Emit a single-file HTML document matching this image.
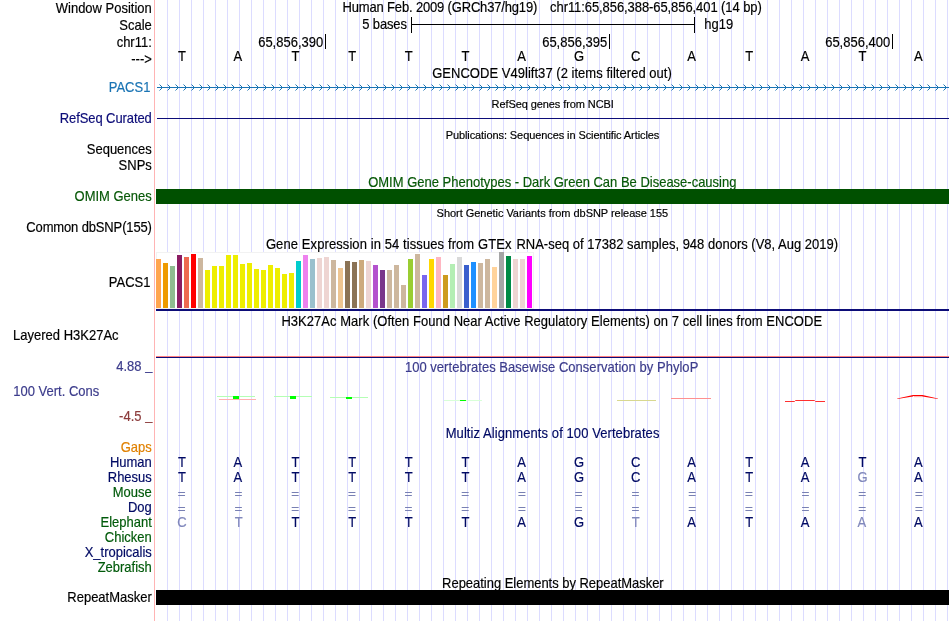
<!DOCTYPE html>
<html><head><meta charset="utf-8"><title>UCSC Genome Browser</title>
<style>html,body{margin:0;padding:0;background:#fff;overflow:hidden}svg{display:block;will-change:transform}text{font-family:'Liberation Sans', sans-serif;white-space:pre}</style></head><body>
<svg width="950" height="621" viewBox="0 0 950 621">
<rect width="950" height="621" fill="#fff"/>
<path d="M167.5 0V621M179.5 0V621M191.5 0V621M203.5 0V621M215.5 0V621M227.5 0V621M239.5 0V621M251.5 0V621M263.5 0V621M275.5 0V621M287.5 0V621M299.5 0V621M311.5 0V621M323.5 0V621M335.5 0V621M347.5 0V621M359.5 0V621M371.5 0V621M383.5 0V621M395.5 0V621M407.5 0V621M419.5 0V621M431.5 0V621M443.5 0V621M455.5 0V621M467.5 0V621M479.5 0V621M491.5 0V621M503.5 0V621M515.5 0V621M527.5 0V621M539.5 0V621M551.5 0V621M563.5 0V621M575.5 0V621M587.5 0V621M599.5 0V621M611.5 0V621M623.5 0V621M635.5 0V621M647.5 0V621M659.5 0V621M671.5 0V621M683.5 0V621M695.5 0V621M707.5 0V621M719.5 0V621M731.5 0V621M743.5 0V621M755.5 0V621M767.5 0V621M779.5 0V621M791.5 0V621M803.5 0V621M815.5 0V621M827.5 0V621M839.5 0V621M851.5 0V621M863.5 0V621M875.5 0V621M887.5 0V621M899.5 0V621M911.5 0V621M923.5 0V621M935.5 0V621M947.5 0V621" stroke="#dcdcff" stroke-width="1" fill="none" shape-rendering="crispEdges"/>
<rect x="154" y="0" width="1" height="621" fill="#ffb4b4" shape-rendering="crispEdges"/>
<text transform="translate(151.8 13) scale(0.9286 1)" text-anchor="end" font-size="14.0" fill="#000" stroke="#000" stroke-width="0.18" xml:space="preserve">Window Position</text>
<text transform="translate(151.8 30) scale(0.9286 1)" text-anchor="end" font-size="14.0" fill="#000" stroke="#000" stroke-width="0.18" xml:space="preserve">Scale</text>
<text transform="translate(151.8 47) scale(0.9286 1)" text-anchor="end" font-size="14.0" fill="#000" stroke="#000" stroke-width="0.18" xml:space="preserve">chr11:</text>
<text transform="translate(151.8 63.6) scale(0.9286 1)" text-anchor="end" font-size="14.0" fill="#000" stroke="#000" stroke-width="0.18" xml:space="preserve">---&gt;</text>
<text transform="translate(342.6 12) scale(0.9286 1)" text-anchor="start" font-size="14.0" fill="#000" stroke="#000" stroke-width="0.18" xml:space="preserve" textLength="209.68" lengthAdjust="spacing">Human Feb. 2009 (GRCh37/hg19)</text>
<text transform="translate(550.1 12) scale(0.9286 1)" text-anchor="start" font-size="14.0" fill="#000" stroke="#000" stroke-width="0.18" xml:space="preserve" textLength="227.98" lengthAdjust="spacing">chr11:65,856,388-65,856,401 (14 bp)</text>
<text transform="translate(362.3 29) scale(0.9286 1)" text-anchor="start" font-size="14.0" fill="#000" stroke="#000" stroke-width="0.18" xml:space="preserve" textLength="48.03" lengthAdjust="spacing">5 bases</text>
<rect x="411" y="17" width="1" height="16" fill="#000" shape-rendering="crispEdges"/>
<rect x="694" y="17" width="1" height="16" fill="#000" shape-rendering="crispEdges"/>
<rect x="411" y="24" width="284" height="1" fill="#000" shape-rendering="crispEdges"/>
<text transform="translate(704.2 29) scale(0.9286 1)" text-anchor="start" font-size="14.0" fill="#000" stroke="#000" stroke-width="0.18" xml:space="preserve">hg19</text>
<text transform="translate(323.2 47.0) scale(0.9286 1)" text-anchor="end" font-size="14.0" fill="#000" stroke="#000" stroke-width="0.18" xml:space="preserve">65,856,390</text>
<rect x="325" y="34" width="1" height="15" fill="#000" shape-rendering="crispEdges"/>
<text transform="translate(607.2 47.0) scale(0.9286 1)" text-anchor="end" font-size="14.0" fill="#000" stroke="#000" stroke-width="0.18" xml:space="preserve">65,856,395</text>
<rect x="609" y="34" width="1" height="15" fill="#000" shape-rendering="crispEdges"/>
<text transform="translate(890.2 47.0) scale(0.9286 1)" text-anchor="end" font-size="14.0" fill="#000" stroke="#000" stroke-width="0.18" xml:space="preserve">65,856,400</text>
<rect x="892" y="34" width="1" height="15" fill="#000" shape-rendering="crispEdges"/>
<text transform="translate(182.0 61) scale(0.9286 1)" text-anchor="middle" font-size="14.0" fill="#000" stroke="#000" stroke-width="0.18" xml:space="preserve">T</text>
<text transform="translate(237.91 61) scale(0.9286 1)" text-anchor="middle" font-size="14.0" fill="#000" stroke="#000" stroke-width="0.18" xml:space="preserve">A</text>
<text transform="translate(295.42 61) scale(0.9286 1)" text-anchor="middle" font-size="14.0" fill="#000" stroke="#000" stroke-width="0.18" xml:space="preserve">T</text>
<text transform="translate(352.13 61) scale(0.9286 1)" text-anchor="middle" font-size="14.0" fill="#000" stroke="#000" stroke-width="0.18" xml:space="preserve">T</text>
<text transform="translate(408.84000000000003 61) scale(0.9286 1)" text-anchor="middle" font-size="14.0" fill="#000" stroke="#000" stroke-width="0.18" xml:space="preserve">T</text>
<text transform="translate(465.55 61) scale(0.9286 1)" text-anchor="middle" font-size="14.0" fill="#000" stroke="#000" stroke-width="0.18" xml:space="preserve">T</text>
<text transform="translate(521.46 61) scale(0.9286 1)" text-anchor="middle" font-size="14.0" fill="#000" stroke="#000" stroke-width="0.18" xml:space="preserve">A</text>
<text transform="translate(578.97 61) scale(0.9286 1)" text-anchor="middle" font-size="14.0" fill="#000" stroke="#000" stroke-width="0.18" xml:space="preserve">G</text>
<text transform="translate(635.6800000000001 61) scale(0.9286 1)" text-anchor="middle" font-size="14.0" fill="#000" stroke="#000" stroke-width="0.18" xml:space="preserve">C</text>
<text transform="translate(691.59 61) scale(0.9286 1)" text-anchor="middle" font-size="14.0" fill="#000" stroke="#000" stroke-width="0.18" xml:space="preserve">A</text>
<text transform="translate(749.1 61) scale(0.9286 1)" text-anchor="middle" font-size="14.0" fill="#000" stroke="#000" stroke-width="0.18" xml:space="preserve">T</text>
<text transform="translate(805.0100000000001 61) scale(0.9286 1)" text-anchor="middle" font-size="14.0" fill="#000" stroke="#000" stroke-width="0.18" xml:space="preserve">A</text>
<text transform="translate(862.52 61) scale(0.9286 1)" text-anchor="middle" font-size="14.0" fill="#000" stroke="#000" stroke-width="0.18" xml:space="preserve">T</text>
<text transform="translate(918.4300000000001 61) scale(0.9286 1)" text-anchor="middle" font-size="14.0" fill="#000" stroke="#000" stroke-width="0.18" xml:space="preserve">A</text>
<text transform="translate(432.2 78) scale(0.9286 1)" text-anchor="start" font-size="14.0" fill="#000" stroke="#000" stroke-width="0.18" xml:space="preserve" textLength="258.03" lengthAdjust="spacing">GENCODE V49lift37 (2 items filtered out)</text>
<text transform="translate(150.4 92) scale(0.9286 1)" text-anchor="end" font-size="14.0" fill="#1a74b4" stroke="#1a74b4" stroke-width="0.18" xml:space="preserve">PACS1</text>
<rect x="157" y="87" width="792" height="1" fill="#1a74b4" shape-rendering="crispEdges"/>
<path d="M159.5 84.5L162.5 87.5L159.5 90.5M167.5 84.5L170.5 87.5L167.5 90.5M175.5 84.5L178.5 87.5L175.5 90.5M183.5 84.5L186.5 87.5L183.5 90.5M191.5 84.5L194.5 87.5L191.5 90.5M199.5 84.5L202.5 87.5L199.5 90.5M207.5 84.5L210.5 87.5L207.5 90.5M215.5 84.5L218.5 87.5L215.5 90.5M223.5 84.5L226.5 87.5L223.5 90.5M231.5 84.5L234.5 87.5L231.5 90.5M239.5 84.5L242.5 87.5L239.5 90.5M247.5 84.5L250.5 87.5L247.5 90.5M255.5 84.5L258.5 87.5L255.5 90.5M263.5 84.5L266.5 87.5L263.5 90.5M271.5 84.5L274.5 87.5L271.5 90.5M279.5 84.5L282.5 87.5L279.5 90.5M287.5 84.5L290.5 87.5L287.5 90.5M295.5 84.5L298.5 87.5L295.5 90.5M303.5 84.5L306.5 87.5L303.5 90.5M311.5 84.5L314.5 87.5L311.5 90.5M319.5 84.5L322.5 87.5L319.5 90.5M327.5 84.5L330.5 87.5L327.5 90.5M335.5 84.5L338.5 87.5L335.5 90.5M343.5 84.5L346.5 87.5L343.5 90.5M351.5 84.5L354.5 87.5L351.5 90.5M359.5 84.5L362.5 87.5L359.5 90.5M367.5 84.5L370.5 87.5L367.5 90.5M375.5 84.5L378.5 87.5L375.5 90.5M383.5 84.5L386.5 87.5L383.5 90.5M391.5 84.5L394.5 87.5L391.5 90.5M399.5 84.5L402.5 87.5L399.5 90.5M407.5 84.5L410.5 87.5L407.5 90.5M415.5 84.5L418.5 87.5L415.5 90.5M423.5 84.5L426.5 87.5L423.5 90.5M431.5 84.5L434.5 87.5L431.5 90.5M439.5 84.5L442.5 87.5L439.5 90.5M447.5 84.5L450.5 87.5L447.5 90.5M455.5 84.5L458.5 87.5L455.5 90.5M463.5 84.5L466.5 87.5L463.5 90.5M471.5 84.5L474.5 87.5L471.5 90.5M479.5 84.5L482.5 87.5L479.5 90.5M487.5 84.5L490.5 87.5L487.5 90.5M495.5 84.5L498.5 87.5L495.5 90.5M503.5 84.5L506.5 87.5L503.5 90.5M511.5 84.5L514.5 87.5L511.5 90.5M519.5 84.5L522.5 87.5L519.5 90.5M527.5 84.5L530.5 87.5L527.5 90.5M535.5 84.5L538.5 87.5L535.5 90.5M543.5 84.5L546.5 87.5L543.5 90.5M551.5 84.5L554.5 87.5L551.5 90.5M559.5 84.5L562.5 87.5L559.5 90.5M567.5 84.5L570.5 87.5L567.5 90.5M575.5 84.5L578.5 87.5L575.5 90.5M583.5 84.5L586.5 87.5L583.5 90.5M591.5 84.5L594.5 87.5L591.5 90.5M599.5 84.5L602.5 87.5L599.5 90.5M607.5 84.5L610.5 87.5L607.5 90.5M615.5 84.5L618.5 87.5L615.5 90.5M623.5 84.5L626.5 87.5L623.5 90.5M631.5 84.5L634.5 87.5L631.5 90.5M639.5 84.5L642.5 87.5L639.5 90.5M647.5 84.5L650.5 87.5L647.5 90.5M655.5 84.5L658.5 87.5L655.5 90.5M663.5 84.5L666.5 87.5L663.5 90.5M671.5 84.5L674.5 87.5L671.5 90.5M679.5 84.5L682.5 87.5L679.5 90.5M687.5 84.5L690.5 87.5L687.5 90.5M695.5 84.5L698.5 87.5L695.5 90.5M703.5 84.5L706.5 87.5L703.5 90.5M711.5 84.5L714.5 87.5L711.5 90.5M719.5 84.5L722.5 87.5L719.5 90.5M727.5 84.5L730.5 87.5L727.5 90.5M735.5 84.5L738.5 87.5L735.5 90.5M743.5 84.5L746.5 87.5L743.5 90.5M751.5 84.5L754.5 87.5L751.5 90.5M759.5 84.5L762.5 87.5L759.5 90.5M767.5 84.5L770.5 87.5L767.5 90.5M775.5 84.5L778.5 87.5L775.5 90.5M783.5 84.5L786.5 87.5L783.5 90.5M791.5 84.5L794.5 87.5L791.5 90.5M799.5 84.5L802.5 87.5L799.5 90.5M807.5 84.5L810.5 87.5L807.5 90.5M815.5 84.5L818.5 87.5L815.5 90.5M823.5 84.5L826.5 87.5L823.5 90.5M831.5 84.5L834.5 87.5L831.5 90.5M839.5 84.5L842.5 87.5L839.5 90.5M847.5 84.5L850.5 87.5L847.5 90.5M855.5 84.5L858.5 87.5L855.5 90.5M863.5 84.5L866.5 87.5L863.5 90.5M871.5 84.5L874.5 87.5L871.5 90.5M879.5 84.5L882.5 87.5L879.5 90.5M887.5 84.5L890.5 87.5L887.5 90.5M895.5 84.5L898.5 87.5L895.5 90.5M903.5 84.5L906.5 87.5L903.5 90.5M911.5 84.5L914.5 87.5L911.5 90.5M919.5 84.5L922.5 87.5L919.5 90.5M927.5 84.5L930.5 87.5L927.5 90.5M935.5 84.5L938.5 87.5L935.5 90.5M943.5 84.5L946.5 87.5L943.5 90.5" stroke="#1a74b4" stroke-width="1" fill="none"/>
<text transform="translate(491.6 108) scale(0.9565 1)" text-anchor="start" font-size="11.5" fill="#000" stroke="#000" stroke-width="0.18" xml:space="preserve" textLength="127.75" lengthAdjust="spacing">RefSeq genes from NCBI</text>
<text transform="translate(151.8 123) scale(0.9286 1)" text-anchor="end" font-size="14.0" fill="#0c0c78" stroke="#0c0c78" stroke-width="0.18" xml:space="preserve" textLength="99.08" lengthAdjust="spacing">RefSeq Curated</text>
<rect x="157" y="118" width="792" height="1" fill="#0c0c78" shape-rendering="crispEdges"/>
<text transform="translate(445.7 139) scale(0.9565 1)" text-anchor="start" font-size="11.5" fill="#000" stroke="#000" stroke-width="0.18" xml:space="preserve" textLength="223.31" lengthAdjust="spacing">Publications: Sequences in Scientific Articles</text>
<text transform="translate(151.8 154) scale(0.9286 1)" text-anchor="end" font-size="14.0" fill="#000" stroke="#000" stroke-width="0.18" xml:space="preserve">Sequences</text>
<text transform="translate(151.8 170) scale(0.9286 1)" text-anchor="end" font-size="14.0" fill="#000" stroke="#000" stroke-width="0.18" xml:space="preserve">SNPs</text>
<text transform="translate(368.2 187) scale(0.9286 1)" text-anchor="start" font-size="14.0" fill="#075807" stroke="#075807" stroke-width="0.18" xml:space="preserve" textLength="396.52" lengthAdjust="spacing">OMIM Gene Phenotypes - Dark Green Can Be Disease-causing</text>
<text transform="translate(151.8 201) scale(0.9286 1)" text-anchor="end" font-size="14.0" fill="#075807" stroke="#075807" stroke-width="0.18" xml:space="preserve">OMIM Genes</text>
<rect x="156" y="189" width="793" height="15" fill="#005000" shape-rendering="crispEdges"/>
<text transform="translate(436.6 217) scale(0.9565 1)" text-anchor="start" font-size="11.5" fill="#000" stroke="#000" stroke-width="0.18" xml:space="preserve" textLength="242.02" lengthAdjust="spacing">Short Genetic Variants from dbSNP release 155</text>
<text transform="translate(151.9 232) scale(0.9286 1)" text-anchor="end" font-size="14.0" fill="#000" stroke="#000" stroke-width="0.18" xml:space="preserve" textLength="135.26" lengthAdjust="spacing">Common dbSNP(155)</text>
<text transform="translate(265.9 249) scale(0.9286 1)" text-anchor="start" font-size="14.0" fill="#000" stroke="#000" stroke-width="0.18" xml:space="preserve" textLength="264.49" lengthAdjust="spacing">Gene Expression in 54 tissues from GTEx</text>
<text transform="translate(516.4 249) scale(0.9286 1)" text-anchor="start" font-size="14.0" fill="#000" stroke="#000" stroke-width="0.18" xml:space="preserve" textLength="346.45" lengthAdjust="spacing">RNA-seq of 17382 samples, 948 donors (V8, Aug 2019)</text>
<text transform="translate(150.5 287) scale(0.9286 1)" text-anchor="end" font-size="14.0" fill="#000" stroke="#000" stroke-width="0.18" xml:space="preserve">PACS1</text>
<rect x="156.5" y="252.5" width="377" height="56" fill="#fff" stroke="#f2f2f2" stroke-width="1" shape-rendering="crispEdges"/>
<rect x="156" y="259" width="5" height="49" fill="#FFA54F" shape-rendering="crispEdges"/>
<rect x="163" y="263" width="5" height="45" fill="#EE9A00" shape-rendering="crispEdges"/>
<rect x="170" y="266" width="5" height="42" fill="#8FBC8F" shape-rendering="crispEdges"/>
<rect x="177" y="255" width="5" height="53" fill="#8B1C62" shape-rendering="crispEdges"/>
<rect x="184" y="257" width="5" height="51" fill="#EE6A50" shape-rendering="crispEdges"/>
<rect x="191" y="254" width="5" height="54" fill="#FF0000" shape-rendering="crispEdges"/>
<rect x="198" y="258" width="5" height="50" fill="#CDB79E" shape-rendering="crispEdges"/>
<rect x="205" y="270" width="5" height="38" fill="#EEEE00" shape-rendering="crispEdges"/>
<rect x="212" y="266" width="5" height="42" fill="#EEEE00" shape-rendering="crispEdges"/>
<rect x="219" y="266" width="5" height="42" fill="#EEEE00" shape-rendering="crispEdges"/>
<rect x="226" y="255" width="5" height="53" fill="#EEEE00" shape-rendering="crispEdges"/>
<rect x="233" y="255" width="5" height="53" fill="#EEEE00" shape-rendering="crispEdges"/>
<rect x="240" y="264" width="5" height="44" fill="#EEEE00" shape-rendering="crispEdges"/>
<rect x="247" y="263" width="5" height="45" fill="#EEEE00" shape-rendering="crispEdges"/>
<rect x="254" y="269" width="5" height="39" fill="#EEEE00" shape-rendering="crispEdges"/>
<rect x="261" y="270" width="5" height="38" fill="#EEEE00" shape-rendering="crispEdges"/>
<rect x="268" y="265" width="5" height="43" fill="#EEEE00" shape-rendering="crispEdges"/>
<rect x="275" y="268" width="5" height="40" fill="#EEEE00" shape-rendering="crispEdges"/>
<rect x="282" y="274" width="5" height="34" fill="#EEEE00" shape-rendering="crispEdges"/>
<rect x="289" y="273" width="5" height="35" fill="#EEEE00" shape-rendering="crispEdges"/>
<rect x="296" y="261" width="5" height="47" fill="#00CDCD" shape-rendering="crispEdges"/>
<rect x="303" y="255" width="5" height="53" fill="#EE82EE" shape-rendering="crispEdges"/>
<rect x="310" y="259" width="5" height="49" fill="#9AC0CD" shape-rendering="crispEdges"/>
<rect x="317" y="258" width="5" height="50" fill="#EED5D2" shape-rendering="crispEdges"/>
<rect x="324" y="257" width="5" height="51" fill="#EED5D2" shape-rendering="crispEdges"/>
<rect x="331" y="260" width="5" height="48" fill="#CDB79E" shape-rendering="crispEdges"/>
<rect x="338" y="268" width="5" height="40" fill="#EEC591" shape-rendering="crispEdges"/>
<rect x="345" y="261" width="5" height="47" fill="#8B7355" shape-rendering="crispEdges"/>
<rect x="352" y="262" width="5" height="46" fill="#8B7355" shape-rendering="crispEdges"/>
<rect x="359" y="260" width="5" height="48" fill="#CDAA7D" shape-rendering="crispEdges"/>
<rect x="366" y="261" width="5" height="47" fill="#EED5D2" shape-rendering="crispEdges"/>
<rect x="373" y="265" width="5" height="43" fill="#B452CD" shape-rendering="crispEdges"/>
<rect x="380" y="270" width="5" height="38" fill="#7A378B" shape-rendering="crispEdges"/>
<rect x="387" y="270" width="5" height="38" fill="#CDB79E" shape-rendering="crispEdges"/>
<rect x="394" y="265" width="5" height="43" fill="#CDB79E" shape-rendering="crispEdges"/>
<rect x="401" y="285" width="5" height="23" fill="#CDB79E" shape-rendering="crispEdges"/>
<rect x="408" y="259" width="5" height="49" fill="#9ACD32" shape-rendering="crispEdges"/>
<rect x="415" y="254" width="5" height="54" fill="#CDB79E" shape-rendering="crispEdges"/>
<rect x="422" y="275" width="5" height="33" fill="#7A67EE" shape-rendering="crispEdges"/>
<rect x="429" y="259" width="5" height="49" fill="#FFD700" shape-rendering="crispEdges"/>
<rect x="436" y="257" width="5" height="51" fill="#FFB6C1" shape-rendering="crispEdges"/>
<rect x="443" y="275" width="5" height="33" fill="#CD9B1D" shape-rendering="crispEdges"/>
<rect x="450" y="264" width="5" height="44" fill="#B4EEB4" shape-rendering="crispEdges"/>
<rect x="457" y="257" width="5" height="51" fill="#D9D9D9" shape-rendering="crispEdges"/>
<rect x="464" y="265" width="5" height="43" fill="#3A5FCD" shape-rendering="crispEdges"/>
<rect x="471" y="262" width="5" height="46" fill="#1E90FF" shape-rendering="crispEdges"/>
<rect x="478" y="263" width="5" height="45" fill="#CDB79E" shape-rendering="crispEdges"/>
<rect x="485" y="259" width="5" height="49" fill="#CDB79E" shape-rendering="crispEdges"/>
<rect x="492" y="267" width="5" height="41" fill="#FFD39B" shape-rendering="crispEdges"/>
<rect x="499" y="252" width="5" height="56" fill="#A6A6A6" shape-rendering="crispEdges"/>
<rect x="506" y="256" width="5" height="52" fill="#008B45" shape-rendering="crispEdges"/>
<rect x="513" y="259" width="5" height="49" fill="#EED5D2" shape-rendering="crispEdges"/>
<rect x="520" y="259" width="5" height="49" fill="#EED5D2" shape-rendering="crispEdges"/>
<rect x="527" y="256" width="5" height="52" fill="#FF00FF" shape-rendering="crispEdges"/>
<rect x="156" y="309" width="793" height="2" fill="#0c0c78" shape-rendering="crispEdges"/>
<text transform="translate(281.4 326) scale(0.9286 1)" text-anchor="start" font-size="14.0" fill="#000" stroke="#000" stroke-width="0.18" xml:space="preserve" textLength="582.29" lengthAdjust="spacing">H3K27Ac Mark (Often Found Near Active Regulatory Elements) on 7 cell lines from ENCODE</text>
<text transform="translate(13.1 340) scale(0.9286 1)" text-anchor="start" font-size="14.0" fill="#000" stroke="#000" stroke-width="0.18" xml:space="preserve">Layered H3K27Ac</text>
<rect x="156" y="356" width="793" height="1" fill="#ff8080" shape-rendering="crispEdges"/>
<rect x="156" y="357" width="793" height="1" fill="#0c0c78" shape-rendering="crispEdges"/>
<text transform="translate(404.9 372) scale(0.9286 1)" text-anchor="start" font-size="14.0" fill="#3c3c8c" stroke="#3c3c8c" stroke-width="0.18" xml:space="preserve" textLength="315.97" lengthAdjust="spacing">100 vertebrates Basewise Conservation by PhyloP</text>
<text transform="translate(141.5 371) scale(0.9286 1)" text-anchor="end" font-size="14.0" fill="#3c3c8c" stroke="#3c3c8c" stroke-width="0.18" xml:space="preserve">4.88</text>
<text transform="translate(152.5 370) scale(0.9286 1)" text-anchor="end" font-size="14.0" fill="#3c3c8c" stroke="#3c3c8c" stroke-width="0.18" xml:space="preserve">_</text>
<text transform="translate(13.3 396) scale(0.9286 1)" text-anchor="start" font-size="14.0" fill="#3c3c8c" stroke="#3c3c8c" stroke-width="0.18" xml:space="preserve">100 Vert. Cons</text>
<text transform="translate(141.5 421) scale(0.9286 1)" text-anchor="end" font-size="14.0" fill="#8c3c3c" stroke="#8c3c3c" stroke-width="0.18" xml:space="preserve">-4.5</text>
<text transform="translate(152.5 420) scale(0.9286 1)" text-anchor="end" font-size="14.0" fill="#8c3c3c" stroke="#8c3c3c" stroke-width="0.18" xml:space="preserve">_</text>
<rect x="217" y="396" width="38" height="1" fill="#b4ffb4" shape-rendering="crispEdges"/>
<rect x="219" y="399" width="37" height="1" fill="#ffb0b0" shape-rendering="crispEdges"/>
<rect x="233" y="396" width="6" height="3" fill="#00ff00" shape-rendering="crispEdges"/>
<rect x="274" y="396" width="38" height="1" fill="#b4ffb4" shape-rendering="crispEdges"/>
<rect x="290" y="396" width="6" height="3" fill="#00ff00" shape-rendering="crispEdges"/>
<rect x="330" y="397" width="38" height="1" fill="#b4ffb4" shape-rendering="crispEdges"/>
<rect x="346" y="397" width="6" height="2" fill="#00ff00" shape-rendering="crispEdges"/>
<rect x="444" y="400" width="38" height="1" fill="#d8ffd8" shape-rendering="crispEdges"/>
<rect x="460" y="400" width="6" height="1" fill="#00ff00" shape-rendering="crispEdges"/>
<rect x="617" y="400" width="39" height="1" fill="#d8d890" shape-rendering="crispEdges"/>
<rect x="671" y="398" width="40" height="1" fill="#ff9090" shape-rendering="crispEdges"/>
<path d="M785 401.5H794.5L795.5 400.5H814.5L815.5 401.5H825" stroke="#ff3030" stroke-width="1" fill="none"/>
<rect x="914" y="396" width="8.5" height="1.2" fill="#ffb4b4"/>
<path d="M897.3 398.5L913 394.9H922.5L937.8 398.5L937.8 399.1L922.6 396.5L922 396H913.5L912.9 396.5L897.3 399.1Z" fill="#ff0000"/>
<text transform="translate(445.7 438) scale(0.9286 1)" text-anchor="start" font-size="14.0" fill="#000a64" stroke="#000a64" stroke-width="0.18" xml:space="preserve" textLength="230.14" lengthAdjust="spacing">Multiz Alignments of 100 Vertebrates</text>
<text transform="translate(151.8 452) scale(0.9286 1)" text-anchor="end" font-size="14.0" fill="#e08000" stroke="#e08000" stroke-width="0.18" xml:space="preserve">Gaps</text>
<text transform="translate(151.8 467) scale(0.9286 1)" text-anchor="end" font-size="14.0" fill="#000a64" stroke="#000a64" stroke-width="0.18" xml:space="preserve">Human</text>
<text transform="translate(151.8 482) scale(0.9286 1)" text-anchor="end" font-size="14.0" fill="#000a64" stroke="#000a64" stroke-width="0.18" xml:space="preserve">Rhesus</text>
<text transform="translate(151.8 497) scale(0.9286 1)" text-anchor="end" font-size="14.0" fill="#005a0a" stroke="#005a0a" stroke-width="0.18" xml:space="preserve">Mouse</text>
<text transform="translate(151.8 512) scale(0.9286 1)" text-anchor="end" font-size="14.0" fill="#000a64" stroke="#000a64" stroke-width="0.18" xml:space="preserve">Dog</text>
<text transform="translate(151.8 527) scale(0.9286 1)" text-anchor="end" font-size="14.0" fill="#005a0a" stroke="#005a0a" stroke-width="0.18" xml:space="preserve">Elephant</text>
<text transform="translate(151.8 542) scale(0.9286 1)" text-anchor="end" font-size="14.0" fill="#005a0a" stroke="#005a0a" stroke-width="0.18" xml:space="preserve">Chicken</text>
<text transform="translate(151.8 557) scale(0.9286 1)" text-anchor="end" font-size="14.0" fill="#000a64" stroke="#000a64" stroke-width="0.18" xml:space="preserve">X_tropicalis</text>
<text transform="translate(151.8 572) scale(0.9286 1)" text-anchor="end" font-size="14.0" fill="#005a0a" stroke="#005a0a" stroke-width="0.18" xml:space="preserve">Zebrafish</text>
<text transform="translate(182.0 467) scale(0.9286 1)" text-anchor="middle" font-size="14.0" fill="#000a64" stroke="#000a64" stroke-width="0.18" xml:space="preserve">T</text>
<text transform="translate(237.91 467) scale(0.9286 1)" text-anchor="middle" font-size="14.0" fill="#000a64" stroke="#000a64" stroke-width="0.18" xml:space="preserve">A</text>
<text transform="translate(295.42 467) scale(0.9286 1)" text-anchor="middle" font-size="14.0" fill="#000a64" stroke="#000a64" stroke-width="0.18" xml:space="preserve">T</text>
<text transform="translate(352.13 467) scale(0.9286 1)" text-anchor="middle" font-size="14.0" fill="#000a64" stroke="#000a64" stroke-width="0.18" xml:space="preserve">T</text>
<text transform="translate(408.84000000000003 467) scale(0.9286 1)" text-anchor="middle" font-size="14.0" fill="#000a64" stroke="#000a64" stroke-width="0.18" xml:space="preserve">T</text>
<text transform="translate(465.55 467) scale(0.9286 1)" text-anchor="middle" font-size="14.0" fill="#000a64" stroke="#000a64" stroke-width="0.18" xml:space="preserve">T</text>
<text transform="translate(521.46 467) scale(0.9286 1)" text-anchor="middle" font-size="14.0" fill="#000a64" stroke="#000a64" stroke-width="0.18" xml:space="preserve">A</text>
<text transform="translate(578.97 467) scale(0.9286 1)" text-anchor="middle" font-size="14.0" fill="#000a64" stroke="#000a64" stroke-width="0.18" xml:space="preserve">G</text>
<text transform="translate(635.6800000000001 467) scale(0.9286 1)" text-anchor="middle" font-size="14.0" fill="#000a64" stroke="#000a64" stroke-width="0.18" xml:space="preserve">C</text>
<text transform="translate(691.59 467) scale(0.9286 1)" text-anchor="middle" font-size="14.0" fill="#000a64" stroke="#000a64" stroke-width="0.18" xml:space="preserve">A</text>
<text transform="translate(749.1 467) scale(0.9286 1)" text-anchor="middle" font-size="14.0" fill="#000a64" stroke="#000a64" stroke-width="0.18" xml:space="preserve">T</text>
<text transform="translate(805.0100000000001 467) scale(0.9286 1)" text-anchor="middle" font-size="14.0" fill="#000a64" stroke="#000a64" stroke-width="0.18" xml:space="preserve">A</text>
<text transform="translate(862.52 467) scale(0.9286 1)" text-anchor="middle" font-size="14.0" fill="#000a64" stroke="#000a64" stroke-width="0.18" xml:space="preserve">T</text>
<text transform="translate(918.4300000000001 467) scale(0.9286 1)" text-anchor="middle" font-size="14.0" fill="#000a64" stroke="#000a64" stroke-width="0.18" xml:space="preserve">A</text>
<text transform="translate(182.0 482) scale(0.9286 1)" text-anchor="middle" font-size="14.0" fill="#000a64" stroke="#000a64" stroke-width="0.18" xml:space="preserve">T</text>
<text transform="translate(237.91 482) scale(0.9286 1)" text-anchor="middle" font-size="14.0" fill="#000a64" stroke="#000a64" stroke-width="0.18" xml:space="preserve">A</text>
<text transform="translate(295.42 482) scale(0.9286 1)" text-anchor="middle" font-size="14.0" fill="#000a64" stroke="#000a64" stroke-width="0.18" xml:space="preserve">T</text>
<text transform="translate(352.13 482) scale(0.9286 1)" text-anchor="middle" font-size="14.0" fill="#000a64" stroke="#000a64" stroke-width="0.18" xml:space="preserve">T</text>
<text transform="translate(408.84000000000003 482) scale(0.9286 1)" text-anchor="middle" font-size="14.0" fill="#000a64" stroke="#000a64" stroke-width="0.18" xml:space="preserve">T</text>
<text transform="translate(465.55 482) scale(0.9286 1)" text-anchor="middle" font-size="14.0" fill="#000a64" stroke="#000a64" stroke-width="0.18" xml:space="preserve">T</text>
<text transform="translate(521.46 482) scale(0.9286 1)" text-anchor="middle" font-size="14.0" fill="#000a64" stroke="#000a64" stroke-width="0.18" xml:space="preserve">A</text>
<text transform="translate(578.97 482) scale(0.9286 1)" text-anchor="middle" font-size="14.0" fill="#000a64" stroke="#000a64" stroke-width="0.18" xml:space="preserve">G</text>
<text transform="translate(635.6800000000001 482) scale(0.9286 1)" text-anchor="middle" font-size="14.0" fill="#000a64" stroke="#000a64" stroke-width="0.18" xml:space="preserve">C</text>
<text transform="translate(691.59 482) scale(0.9286 1)" text-anchor="middle" font-size="14.0" fill="#000a64" stroke="#000a64" stroke-width="0.18" xml:space="preserve">A</text>
<text transform="translate(749.1 482) scale(0.9286 1)" text-anchor="middle" font-size="14.0" fill="#000a64" stroke="#000a64" stroke-width="0.18" xml:space="preserve">T</text>
<text transform="translate(805.0100000000001 482) scale(0.9286 1)" text-anchor="middle" font-size="14.0" fill="#000a64" stroke="#000a64" stroke-width="0.18" xml:space="preserve">A</text>
<text transform="translate(862.52 482) scale(0.9286 1)" text-anchor="middle" font-size="14.0" fill="#8088bb" stroke="#8088bb" stroke-width="0.18" xml:space="preserve">G</text>
<text transform="translate(918.4300000000001 482) scale(0.9286 1)" text-anchor="middle" font-size="14.0" fill="#000a64" stroke="#000a64" stroke-width="0.18" xml:space="preserve">A</text>
<text transform="translate(181.7 498.1) scale(1.2800 1)" text-anchor="middle" font-size="10.5" fill="#7880b4" stroke="#7880b4" stroke-width="0.18" xml:space="preserve">=</text>
<text transform="translate(238.41 498.1) scale(1.2800 1)" text-anchor="middle" font-size="10.5" fill="#7880b4" stroke="#7880b4" stroke-width="0.18" xml:space="preserve">=</text>
<text transform="translate(295.12 498.1) scale(1.2800 1)" text-anchor="middle" font-size="10.5" fill="#7880b4" stroke="#7880b4" stroke-width="0.18" xml:space="preserve">=</text>
<text transform="translate(351.83 498.1) scale(1.2800 1)" text-anchor="middle" font-size="10.5" fill="#7880b4" stroke="#7880b4" stroke-width="0.18" xml:space="preserve">=</text>
<text transform="translate(408.54 498.1) scale(1.2800 1)" text-anchor="middle" font-size="10.5" fill="#7880b4" stroke="#7880b4" stroke-width="0.18" xml:space="preserve">=</text>
<text transform="translate(465.25 498.1) scale(1.2800 1)" text-anchor="middle" font-size="10.5" fill="#7880b4" stroke="#7880b4" stroke-width="0.18" xml:space="preserve">=</text>
<text transform="translate(521.96 498.1) scale(1.2800 1)" text-anchor="middle" font-size="10.5" fill="#7880b4" stroke="#7880b4" stroke-width="0.18" xml:space="preserve">=</text>
<text transform="translate(578.6700000000001 498.1) scale(1.2800 1)" text-anchor="middle" font-size="10.5" fill="#7880b4" stroke="#7880b4" stroke-width="0.18" xml:space="preserve">=</text>
<text transform="translate(635.3800000000001 498.1) scale(1.2800 1)" text-anchor="middle" font-size="10.5" fill="#7880b4" stroke="#7880b4" stroke-width="0.18" xml:space="preserve">=</text>
<text transform="translate(692.09 498.1) scale(1.2800 1)" text-anchor="middle" font-size="10.5" fill="#7880b4" stroke="#7880b4" stroke-width="0.18" xml:space="preserve">=</text>
<text transform="translate(748.8000000000001 498.1) scale(1.2800 1)" text-anchor="middle" font-size="10.5" fill="#7880b4" stroke="#7880b4" stroke-width="0.18" xml:space="preserve">=</text>
<text transform="translate(805.5100000000001 498.1) scale(1.2800 1)" text-anchor="middle" font-size="10.5" fill="#7880b4" stroke="#7880b4" stroke-width="0.18" xml:space="preserve">=</text>
<text transform="translate(862.22 498.1) scale(1.2800 1)" text-anchor="middle" font-size="10.5" fill="#7880b4" stroke="#7880b4" stroke-width="0.18" xml:space="preserve">=</text>
<text transform="translate(918.9300000000001 498.1) scale(1.2800 1)" text-anchor="middle" font-size="10.5" fill="#7880b4" stroke="#7880b4" stroke-width="0.18" xml:space="preserve">=</text>
<text transform="translate(181.7 513.1) scale(1.2800 1)" text-anchor="middle" font-size="10.5" fill="#7880b4" stroke="#7880b4" stroke-width="0.18" xml:space="preserve">=</text>
<text transform="translate(238.41 513.1) scale(1.2800 1)" text-anchor="middle" font-size="10.5" fill="#7880b4" stroke="#7880b4" stroke-width="0.18" xml:space="preserve">=</text>
<text transform="translate(295.12 513.1) scale(1.2800 1)" text-anchor="middle" font-size="10.5" fill="#7880b4" stroke="#7880b4" stroke-width="0.18" xml:space="preserve">=</text>
<text transform="translate(351.83 513.1) scale(1.2800 1)" text-anchor="middle" font-size="10.5" fill="#7880b4" stroke="#7880b4" stroke-width="0.18" xml:space="preserve">=</text>
<text transform="translate(408.54 513.1) scale(1.2800 1)" text-anchor="middle" font-size="10.5" fill="#7880b4" stroke="#7880b4" stroke-width="0.18" xml:space="preserve">=</text>
<text transform="translate(465.25 513.1) scale(1.2800 1)" text-anchor="middle" font-size="10.5" fill="#7880b4" stroke="#7880b4" stroke-width="0.18" xml:space="preserve">=</text>
<text transform="translate(521.96 513.1) scale(1.2800 1)" text-anchor="middle" font-size="10.5" fill="#7880b4" stroke="#7880b4" stroke-width="0.18" xml:space="preserve">=</text>
<text transform="translate(578.6700000000001 513.1) scale(1.2800 1)" text-anchor="middle" font-size="10.5" fill="#7880b4" stroke="#7880b4" stroke-width="0.18" xml:space="preserve">=</text>
<text transform="translate(635.3800000000001 513.1) scale(1.2800 1)" text-anchor="middle" font-size="10.5" fill="#7880b4" stroke="#7880b4" stroke-width="0.18" xml:space="preserve">=</text>
<text transform="translate(692.09 513.1) scale(1.2800 1)" text-anchor="middle" font-size="10.5" fill="#7880b4" stroke="#7880b4" stroke-width="0.18" xml:space="preserve">=</text>
<text transform="translate(748.8000000000001 513.1) scale(1.2800 1)" text-anchor="middle" font-size="10.5" fill="#7880b4" stroke="#7880b4" stroke-width="0.18" xml:space="preserve">=</text>
<text transform="translate(805.5100000000001 513.1) scale(1.2800 1)" text-anchor="middle" font-size="10.5" fill="#7880b4" stroke="#7880b4" stroke-width="0.18" xml:space="preserve">=</text>
<text transform="translate(862.22 513.1) scale(1.2800 1)" text-anchor="middle" font-size="10.5" fill="#7880b4" stroke="#7880b4" stroke-width="0.18" xml:space="preserve">=</text>
<text transform="translate(918.9300000000001 513.1) scale(1.2800 1)" text-anchor="middle" font-size="10.5" fill="#7880b4" stroke="#7880b4" stroke-width="0.18" xml:space="preserve">=</text>
<text transform="translate(182.0 527) scale(0.9286 1)" text-anchor="middle" font-size="14.0" fill="#8088bb" stroke="#8088bb" stroke-width="0.18" xml:space="preserve">C</text>
<text transform="translate(238.71 527) scale(0.9286 1)" text-anchor="middle" font-size="14.0" fill="#8088bb" stroke="#8088bb" stroke-width="0.18" xml:space="preserve">T</text>
<text transform="translate(295.42 527) scale(0.9286 1)" text-anchor="middle" font-size="14.0" fill="#000a64" stroke="#000a64" stroke-width="0.18" xml:space="preserve">T</text>
<text transform="translate(352.13 527) scale(0.9286 1)" text-anchor="middle" font-size="14.0" fill="#000a64" stroke="#000a64" stroke-width="0.18" xml:space="preserve">T</text>
<text transform="translate(408.84000000000003 527) scale(0.9286 1)" text-anchor="middle" font-size="14.0" fill="#000a64" stroke="#000a64" stroke-width="0.18" xml:space="preserve">T</text>
<text transform="translate(465.55 527) scale(0.9286 1)" text-anchor="middle" font-size="14.0" fill="#000a64" stroke="#000a64" stroke-width="0.18" xml:space="preserve">T</text>
<text transform="translate(521.46 527) scale(0.9286 1)" text-anchor="middle" font-size="14.0" fill="#000a64" stroke="#000a64" stroke-width="0.18" xml:space="preserve">A</text>
<text transform="translate(578.97 527) scale(0.9286 1)" text-anchor="middle" font-size="14.0" fill="#000a64" stroke="#000a64" stroke-width="0.18" xml:space="preserve">G</text>
<text transform="translate(635.6800000000001 527) scale(0.9286 1)" text-anchor="middle" font-size="14.0" fill="#8088bb" stroke="#8088bb" stroke-width="0.18" xml:space="preserve">T</text>
<text transform="translate(691.59 527) scale(0.9286 1)" text-anchor="middle" font-size="14.0" fill="#000a64" stroke="#000a64" stroke-width="0.18" xml:space="preserve">A</text>
<text transform="translate(749.1 527) scale(0.9286 1)" text-anchor="middle" font-size="14.0" fill="#000a64" stroke="#000a64" stroke-width="0.18" xml:space="preserve">T</text>
<text transform="translate(805.0100000000001 527) scale(0.9286 1)" text-anchor="middle" font-size="14.0" fill="#000a64" stroke="#000a64" stroke-width="0.18" xml:space="preserve">A</text>
<text transform="translate(861.72 527) scale(0.9286 1)" text-anchor="middle" font-size="14.0" fill="#8088bb" stroke="#8088bb" stroke-width="0.18" xml:space="preserve">A</text>
<text transform="translate(918.4300000000001 527) scale(0.9286 1)" text-anchor="middle" font-size="14.0" fill="#000a64" stroke="#000a64" stroke-width="0.18" xml:space="preserve">A</text>
<text transform="translate(442.1 588) scale(0.9286 1)" text-anchor="start" font-size="14.0" fill="#000" stroke="#000" stroke-width="0.18" xml:space="preserve" textLength="238.65" lengthAdjust="spacing">Repeating Elements by RepeatMasker</text>
<text transform="translate(151.8 602) scale(0.9286 1)" text-anchor="end" font-size="14.0" fill="#000" stroke="#000" stroke-width="0.18" xml:space="preserve">RepeatMasker</text>
<rect x="156" y="590" width="793" height="15" fill="#000" shape-rendering="crispEdges"/>
</svg></body></html>
